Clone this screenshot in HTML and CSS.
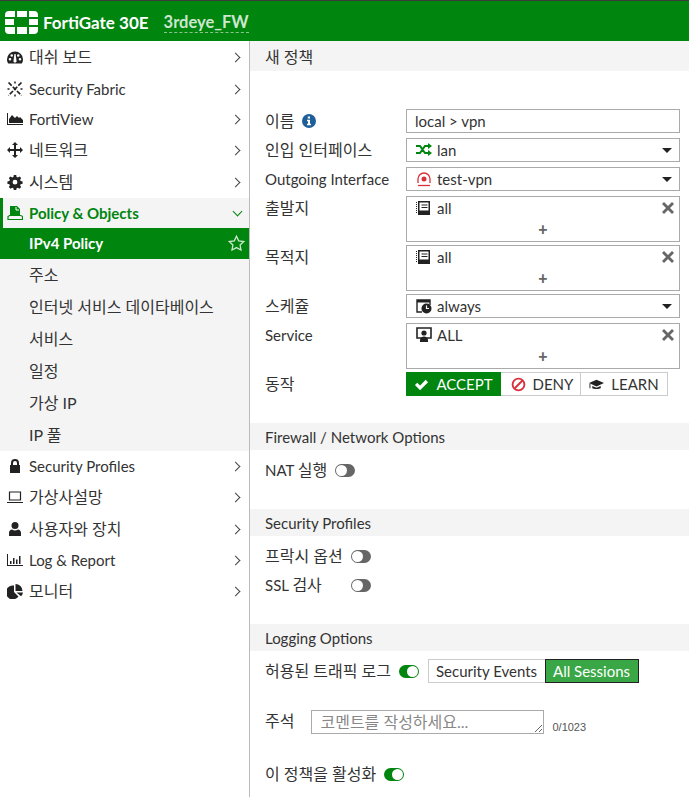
FILE: index.html
```html
<!DOCTYPE html>
<html lang="ko">
<head>
    <meta charset="UTF-8">
    <title>FortiGate 30E</title>
    <link rel="stylesheet" href="styles.css">
</head>
<body>
    <header class="topbar">
        <svg class="logo" width="33" height="24" viewBox="0 0 33 24" fill="#fff">
            <path d="M4 0h6v6H0V4a4 4 0 0 1 4-4zM12 0h10v6H12zM24 0h5a4 4 0 0 1 4 4v2h-9zM0 8h9v6H0zM24 8h9v6h-9zM0 16h10v7H4a4 4 0 0 1-4-4zM12 16h10v7H12zM24 16h9v3a4 4 0 0 1-4 4h-5z"/>
        </svg>
        <span class="product">FortiGate 30E</span>
        <span class="hostname">3rdeye_FW</span>
    </header>

    <div class="layout">
        <nav class="sidebar">
            <a class="nav-row ko first">
                <svg class="nav-icon" viewBox="0 0 16 16"><path d="M8 1.500a8 7.800 0 0 0-8 7.800c0 1.900.5 3.200 1.300 4.200h13.400c.8-1 1.300-2.300 1.300-4.200A8 7.800 0 0 0 8 1.500zM3 10.500a1.300 1.300 0 1 1 0-2.600 1.300 1.300 0 0 1 0 2.600zm1.700-3.700a1.300 1.300 0 1 1 0-2.600 1.300 1.300 0 0 1 0 2.600zM9.600 11.500a1.700 1.700 0 0 1-3.200 0L7.400 4h1.200zM11.300 6.800a1.300 1.300 0 1 1 0-2.600 1.300 1.300 0 0 1 0 2.600zM13 10.500a1.300 1.300 0 1 1 0-2.600 1.300 1.300 0 0 1 0 2.600z"/></svg>
                <span class="nav-label">대쉬 보드</span><span class="chevron"></span>
            </a>
            <a class="nav-row">
                <svg class="nav-icon" viewBox="0 0 16 16"><path d="M1.500 1.500l13 13M14.500 1.500l-13 13" stroke="#222" stroke-width="1.700" stroke-dasharray="4.500 1.500" fill="none"/><path d="M8 .5v2M8 13.500v2M.5 8h2M13.500 8h2" stroke="#222" stroke-width="1.500" fill="none"/></svg>
                <span class="nav-label">Security Fabric</span><span class="chevron"></span>
            </a>
            <a class="nav-row">
                <svg class="nav-icon" viewBox="0 0 16 16"><path d="M0 2h1v11h15v1H0z"/><path d="M2 12V8l3-4 3 3 2-2 2 2 1-1 3 3v3z"/></svg>
                <span class="nav-label">FortiView</span><span class="chevron"></span>
            </a>
            <a class="nav-row ko">
                <svg class="nav-icon" viewBox="0 0 16 16"><path d="M8 0l3 3H9v4h4V5l3 3-3 3V9H9v4h2l-3 3-3-3h2V9H3v2L0 8l3-3v2h4V3H5z"/></svg>
                <span class="nav-label">네트워크</span><span class="chevron"></span>
            </a>
            <a class="nav-row ko">
                <svg class="nav-icon" viewBox="0 0 16 16"><path fill-rule="evenodd" d="M6.800 1h2.400l.4 2 1.200.5 1.700-1.100 1.700 1.700-1.100 1.700.5 1.200 2 .4v2.400l-2 .4-.5 1.200 1.100 1.700-1.700 1.700-1.700-1.100-1.200.5-.4 2H6.800l-.4-2-1.200-.5-1.700 1.100-1.700-1.700 1.100-1.700-.5-1.200-2-.4V7.400l2-.4.5-1.200-1.100-1.700 1.700-1.700 1.700 1.100 1.200-.5zM8 5.800a2.400 2.400 0 1 0 0 4.800 2.400 2.400 0 0 0 0-4.800z"/></svg>
                <span class="nav-label">시스템</span><span class="chevron"></span>
            </a>
            <a class="nav-row open">
                <svg class="nav-icon" viewBox="0 0 16 16"><path d="M3 1h7l3 3v6H3z" fill="#00850f"/><path d="M9 2v3h3" fill="none" stroke="#fff"/><path d="M2.500 10.500h11c1 0 2 1 2 2v2H1v-3z" fill="none" stroke="#00850f" stroke-width="1.200"/></svg>
                <span class="nav-label">Policy &amp; Objects</span><span class="chevron down"></span>
            </a>
            <div class="submenu">
                <a class="sub-row active">
                    <span class="nav-label">IPv4 Policy</span>
                    <svg class="star" width="17" height="16" viewBox="0 0 17 16"><path d="M8.500 1.200l2.200 4.600 5 .7-3.600 3.500.9 5-4.500-2.400L4 15l.9-5L1.300 6.500l5-.7z" fill="none" stroke="#cfe6cf" stroke-width="1.300"/></svg>
                </a>
                <a class="sub-row ko">주소</a>
                <a class="sub-row ko">인터넷 서비스 데이타베이스</a>
                <a class="sub-row ko">서비스</a>
                <a class="sub-row ko">일정</a>
                <a class="sub-row ko">가상 IP</a>
                <a class="sub-row ko">IP 풀</a>
            </div>
            <a class="nav-row">
                <svg class="nav-icon" viewBox="0 0 16 16"><path d="M8 1a4 4 0 0 0-4 4v2H3v8h10V7h-1V5a4 4 0 0 0-4-4zM6 7V5a2 2 0 1 1 4 0v2z"/></svg>
                <span class="nav-label">Security Profiles</span><span class="chevron"></span>
            </a>
            <a class="nav-row ko">
                <svg class="nav-icon" viewBox="0 0 16 16"><path d="M2.500 3h11v8h-11z" fill="none" stroke="#222" stroke-width="1.200"/><path d="M0 13h16v1H0z"/></svg>
                <span class="nav-label">가상사설망</span><span class="chevron"></span>
            </a>
            <a class="nav-row ko">
                <svg class="nav-icon" viewBox="0 0 16 16"><circle cx="8" cy="4.500" r="3.500"/><path d="M2 15v-3c0-2 1.500-3.500 3-3.500 1 .7 2 1 3 1s2-.3 3-1c1.500 0 3 1.500 3 3.500v3z"/></svg>
                <span class="nav-label">사용자와 장치</span><span class="chevron"></span>
            </a>
            <a class="nav-row">
                <svg class="nav-icon" viewBox="0 0 16 16"><path d="M0 2h1v11h15v1H0zM3 9h1.500v3H3zM6 6h1.500v6H6zM9 7.500h1.500V12H9zM12 4h1.500v8H12z"/></svg>
                <span class="nav-label">Log &amp; Report</span><span class="chevron"></span>
            </a>
            <a class="nav-row ko">
                <svg class="nav-icon" viewBox="0 0 16 16"><path d="M7 2.500V9l4.500 4.500A7 7 0 1 1 7 2.500z"/><path d="M8.500 1a7 7 0 0 1 7 7h-7zM9.500 9.500H16a7 7 0 0 1-2 3.800z"/></svg>
                <span class="nav-label">모니터</span><span class="chevron"></span>
            </a>
        </nav>

        <main class="content">
            <h2 class="band band-top"><span class="ko-text">새 정책</span></h2>

            <form class="policy-form">
                <div class="row">
                    <label class="row-label"><span class="ko-text">이름</span> <svg class="info" width="14" height="14" viewBox="0 0 14 14"><circle cx="7" cy="7" r="7" fill="#1f5f99"/><path d="M5.800 2.500h2.200v2H5.800zM5 5.800h3v4h1v1.500H5V9.800h1V7.300H5z" fill="#fff"/></svg></label>
                    <input class="text-field" type="text" value="local &gt; vpn">
                </div>
                <div class="row">
                    <label class="row-label"><span class="ko-text">인입 인터페이스</span></label>
                    <div class="select">
                        <svg class="field-icon" viewBox="0 0 16 16"><path d="M0 4h4l5 7h4M0 11h4l5-7h4" fill="none" stroke="#00850f" stroke-width="2"/><path d="M12 1L16 4l-4 3zM12 8L16 11l-4 3z" fill="#00850f"/></svg>
                        <span>lan</span><span class="caret"></span>
                    </div>
                </div>
                <div class="row">
                    <label class="row-label latin">Outgoing Interface</label>
                    <div class="select">
                        <svg class="field-icon" viewBox="0 0 16 16"><path d="M2 12V8a6 6 0 0 1 12 0v4" fill="none" stroke="#d9313c" stroke-width="1.300"/><circle cx="8" cy="8" r="2.500" fill="#d9313c"/><path d="M2 14.500h12" stroke="#d9313c" stroke-width="1.300"/></svg>
                        <span>test-vpn</span><span class="caret"></span>
                    </div>
                </div>
                <div class="row row-list">
                    <label class="row-label"><span class="ko-text">출발지</span></label>
                    <div class="list-box">
                        <div class="list-item">
                            <svg class="field-icon" viewBox="0 0 16 16"><path d="M2 1h12v14H2z" fill="#222"/><path d="M3.500 2.500h9v8h-9z" fill="#fff"/><path d="M5.500 4.500h6v1h-6zM5.500 7h6v1h-6z" fill="#222"/><path d="M0.500 2v12" stroke="#222" stroke-dasharray="1 1"/></svg>
                            <span>all</span><svg class="remove" viewBox="0 0 12 12"><path d="M2 0l4 4 4-4 2 2-4 4 4 4-2 2-4-4-4 4-2-2 4-4-4-4z"/></svg>
                        </div>
                        <div class="add">+</div>
                    </div>
                </div>
                <div class="row row-list">
                    <label class="row-label"><span class="ko-text">목적지</span></label>
                    <div class="list-box">
                        <div class="list-item">
                            <svg class="field-icon" viewBox="0 0 16 16"><path d="M2 1h12v14H2z" fill="#222"/><path d="M3.500 2.500h9v8h-9z" fill="#fff"/><path d="M5.500 4.500h6v1h-6zM5.500 7h6v1h-6z" fill="#222"/><path d="M0.500 2v12" stroke="#222" stroke-dasharray="1 1"/></svg>
                            <span>all</span><svg class="remove" viewBox="0 0 12 12"><path d="M2 0l4 4 4-4 2 2-4 4 4 4-2 2-4-4-4 4-2-2 4-4-4-4z"/></svg>
                        </div>
                        <div class="add">+</div>
                    </div>
                </div>
                <div class="row">
                    <label class="row-label"><span class="ko-text">스케쥴</span></label>
                    <div class="select">
                        <svg class="field-icon" viewBox="0 0 16 16"><path d="M6 14H1V2h13v5" fill="none" stroke="#222" stroke-width="1.400"/><path d="M1 2h13v2.500H1z" fill="#222"/><circle cx="10.500" cy="10.500" r="5" fill="#222"/><path d="M10.500 7.500v3h2.500" fill="none" stroke="#fff" stroke-width="1.200"/></svg>
                        <span>always</span><span class="caret"></span>
                    </div>
                </div>
                <div class="row row-list">
                    <label class="row-label latin">Service</label>
                    <div class="list-box">
                        <div class="list-item">
                            <svg class="field-icon" viewBox="0 0 16 16"><path d="M1 1h14v10H1z" fill="none" stroke="#222" stroke-width="1.600"/><circle cx="8" cy="6" r="2.600" fill="#222"/><path d="M4 15v-2c0-2 2-3.500 4-3.500s4 1.500 4 3.500v2z" fill="#222"/></svg>
                            <span>ALL</span><svg class="remove" viewBox="0 0 12 12"><path d="M2 0l4 4 4-4 2 2-4 4 4 4-2 2-4-4-4 4-2-2 4-4-4-4z"/></svg>
                        </div>
                        <div class="add">+</div>
                    </div>
                </div>
                <div class="row row-action">
                    <label class="row-label"><span class="ko-text">동작</span></label>
                    <div class="btn-group">
                        <span class="seg seg-accept"><svg class="seg-icon" viewBox="0 0 16 16"><path d="M1 8.500l2.500-2.500L6.500 9l6-6L15 5.500 6.500 14z" fill="#fff"/></svg>ACCEPT</span>
                        <span class="seg seg-deny"><svg class="seg-icon" viewBox="0 0 16 16"><circle cx="8" cy="8" r="6.300" fill="none" stroke="#d9313c" stroke-width="2"/><path d="M3.500 12.500l9-9" stroke="#d9313c" stroke-width="2"/></svg>DENY</span>
                        <span class="seg seg-learn"><svg class="seg-icon" viewBox="0 0 16 16"><path d="M8 3L0 6.500 8 10l8-3.500z" fill="#222"/><path d="M3.500 9.500V12c1.500 1 7.500 1 9 0V9.500L8 11.500z" fill="#222"/><path d="M1 7v5" stroke="#222"/></svg>LEARN</span>
                    </div>
                </div>

                <h3 class="band band-firewall">Firewall / Network Options</h3>
                <div class="toggle-row nat-row">
                    <label>NAT <span class="ko-text">실행</span></label><span class="toggle"></span>
                </div>

                <h3 class="band band-security">Security Profiles</h3>
                <div class="toggle-row proxy-row">
                    <label class="toggle-label"><span class="ko-text">프락시 옵션</span></label><span class="toggle"></span>
                </div>
                <div class="toggle-row ssl-row">
                    <label class="toggle-label">SSL <span class="ko-text">검사</span></label><span class="toggle"></span>
                </div>

                <h3 class="band band-logging">Logging Options</h3>
                <div class="toggle-row log-row">
                    <label><span class="ko-text">허용된 트래픽 로그</span></label><span class="toggle on"></span>
                    <div class="log-group">
                        <span class="log-seg">Security Events</span>
                        <span class="log-seg selected">All Sessions</span>
                    </div>
                </div>
                <div class="comment-row">
                    <label><span class="ko-text">주석</span></label>
                    <textarea class="comment" placeholder="코멘트를 작성하세요..."></textarea>
                    <span class="counter">0/1023</span>
                </div>
                <div class="toggle-row enable-row">
                    <label><span class="ko-text">이 정책을 활성화</span></label><span class="toggle on"></span>
                </div>
            </form>
        </main>
    </div>
</body>
</html>
```

FILE: styles.css
```css
* {
    box-sizing: border-box;
}
html, body {
    height: 100%;
}
body {
    margin: 0;
    font-family: Lato, "Noto Sans CJK KR", sans-serif;
    font-size: 15px;
    color: #333;
    background-color: #fff;
    overflow: hidden;
}
.ko-text {
    font-size: 16px;
    line-height: 20px;
}
.topbar {
    display: flex;
    align-items: center;
    height: 41px;
    padding-left: 5px;
    padding-top: 3px;
    background-color: #00850f;
    border-top: 1px solid #3c3c3c;
}
.logo {
    margin-right: 5px;
}
.product {
    color: #fff;
    font-size: 17px;
    font-weight: 700;
    margin-right: 15px;
}
.hostname {
    color: #cfe6cf;
    font-size: 16.500px;
    font-weight: 700;
    line-height: 20px;
    border-bottom: 1px dashed #8cc48e;
}
.layout {
    display: flex;
    height: 756px;
}
.sidebar {
    width: 250px;
    flex-shrink: 0;
    background-color: #fff;
    border-right: 1px solid #bbb;
}
.nav-row {
    display: flex;
    align-items: center;
    height: 30px;
    padding-left: 7px;
    padding-right: 6px;
    color: #333;
}
.nav-row.ko {
    height: 32px;
}
.nav-row.ko .nav-label, .sub-row.ko {
    font-size: 16px;
    line-height: 20px;
}
.nav-row.ko .nav-label {
    padding-bottom: 1px;
}
.sub-row.ko {
    padding-bottom: 1px;
}
.nav-row.first {
    height: 33px;
}
.nav-row.open {
    background-color: #f4f4f4;
    border-left: 3px solid #00850f;
    padding-left: 4px;
    color: #00850f;
    font-weight: 700;
}
.nav-icon {
    width: 16px;
    height: 16px;
    fill: #222;
    margin-right: 6px;
    flex-shrink: 0;
}
.nav-label {
    flex: 1;
    white-space: nowrap;
}
.chevron {
    width: 7px;
    height: 7px;
    margin-right: 4px;
    border-top: 1.500px solid #444;
    border-right: 1.500px solid #444;
    transform: rotate(45deg);
}
.chevron.down {
    margin-right: 2px;
    margin-bottom: 3px;
    border-color: #00850f;
    transform: rotate(135deg);
}
.submenu {
    background-color: #f4f4f4;
}
.sub-row {
    display: flex;
    align-items: center;
    height: 32px;
    padding-left: 29px;
    color: #333;
}
.sub-row.active {
    height: 31px;
    padding-right: 4px;
    padding-bottom: 1px;
    background-color: #00850f;
    color: #fff;
    font-weight: 700;
}
.content {
    flex: 1;
    min-width: 0;
}
.band {
    display: flex;
    align-items: center;
    height: 27px;
    margin: 0;
    padding-left: 15px;
    background-color: #f4f4f4;
    font-size: 15px;
    font-weight: 400;
}
.band-top {
    height: 30px;
    padding-top: 1px;
}
.policy-form {
    padding-top: 38px;
}
.row {
    display: flex;
    margin-bottom: 5px;
    padding-left: 15px;
    padding-right: 9px;
    line-height: 22px;
}
.row-list {
    margin-bottom: 3px;
}
.row-label {
    display: flex;
    align-items: flex-start;
    width: 141px;
    flex-shrink: 0;
    white-space: nowrap;
    padding-top: 2px;
}
.row-label.latin {
    padding-top: 1px;
}
.info {
    margin: 3px 0 0 8px;
}
.text-field, .select, .list-box {
    flex: 1;
    border: 1px solid #aaa;
    background-color: #fff;
    color: #333;
    font: inherit;
}
.text-field {
    height: 24px;
    padding: 0 8px;
    outline: none;
}
.select {
    display: flex;
    align-items: center;
    height: 24px;
    padding-left: 9px;
}
.field-icon {
    width: 16px;
    height: 16px;
    margin-right: 5px;
    flex-shrink: 0;
}
.caret {
    width: 0;
    height: 0;
    margin-left: auto;
    margin-right: 7px;
    border-left: 5px solid transparent;
    border-right: 5px solid transparent;
    border-top: 5px solid #222;
}
.list-box {
    height: 46px;
}
.list-item {
    display: flex;
    align-items: center;
    height: 22px;
    padding-left: 9px;
}
.remove {
    width: 12px;
    height: 12px;
    margin-left: auto;
    margin-right: 5px;
    fill: #666;
}
.add {
    text-align: center;
    height: 22px;
    line-height: 20px;
    color: #666;
    font-size: 16px;
    font-weight: 900;
}
.row-action {
    margin-bottom: 27px;
    align-items: center;
}
.row-action .row-label {
    padding-top: 0;
}
.btn-group {
    display: flex;
    height: 24px;
    line-height: 22px;
}
.seg {
    display: flex;
    align-items: center;
    justify-content: center;
    height: 24px;
    border: 1px solid #ccc;
    border-left: none;
}
.seg-accept {
    width: 95px;
    background-color: #00850f;
    border: none;
    color: #fff;
}
.seg-deny {
    width: 80px;
    padding-left: 3px;
}
.seg-learn {
    width: 87px;
}
.seg-icon {
    width: 15px;
    height: 15px;
    margin-right: 7px;
}
.toggle-row {
    display: flex;
    align-items: center;
    padding-left: 15px;
    height: 22px;
}
.toggle {
    display: block;
    position: relative;
    width: 20px;
    height: 13px;
    border-radius: 7px;
    background-color: #666;
    margin-left: 8px;
}
.toggle::after {
    content: "";
    position: absolute;
    left: 1px;
    top: 1px;
    width: 11px;
    height: 11px;
    border-radius: 50%;
    background-color: #fff;
}
.toggle.on {
    background-color: #00850f;
}
.toggle.on::after {
    left: 8px;
}
.toggle-label {
    width: 78px;
    white-space: nowrap;
}
.nat-row {
    margin-top: 9px;
    margin-bottom: 28px;
}
.proxy-row {
    margin-top: 9px;
}
.ssl-row {
    margin-top: 7px;
    margin-bottom: 28px;
}
.log-row {
    margin-top: 8px;
    height: 24px;
}
.log-group {
    display: flex;
    height: 24px;
    margin-left: 9px;
    line-height: 22px;
}
.log-seg {
    padding: 0 8px 0 7px;
    border: 1px solid #ccc;
    border-right: none;
    white-space: nowrap;
}
.log-seg.selected {
    background-color: #39a746;
    border: 1px solid #222;
    color: #fff;
}
.comment-row {
    display: flex;
    align-items: flex-start;
    margin-top: 27px;
    padding-left: 15px;
    line-height: 22px;
}
.comment {
    width: 233px;
    height: 24px;
    margin-left: 17px;
    padding: 1px 8px;
    border: 1px solid #aaa;
    font: inherit;
    font-size: 16px;
    line-height: 20px;
    color: #333;
}
.comment::placeholder {
    color: #888;
}
.counter {
    margin-left: 8px;
    margin-top: 6px;
    font-family: "Liberation Sans", sans-serif;
    font-size: 11px;
    color: #555;
}
.enable-row {
    margin-top: 25px;
}
```
